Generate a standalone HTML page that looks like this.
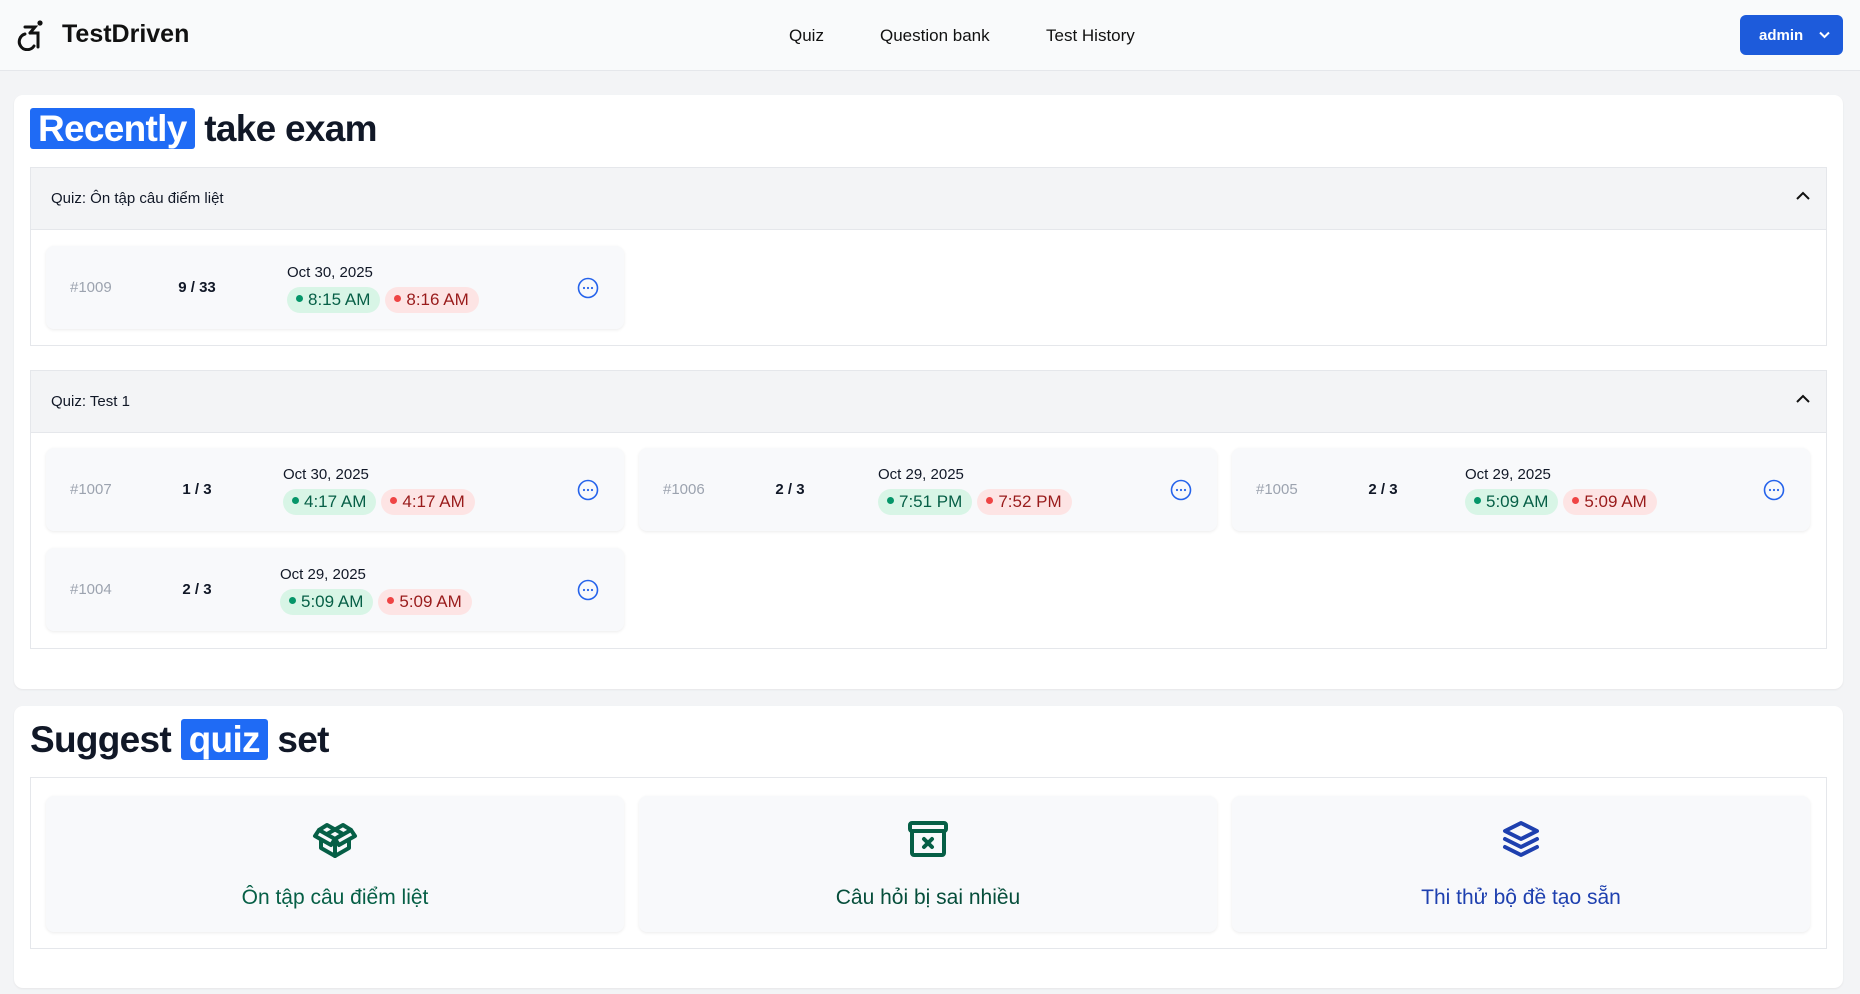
<!DOCTYPE html>
<html><head><meta charset="utf-8"><style>
*{box-sizing:border-box;margin:0;padding:0}
body{width:1860px;height:994px;overflow:hidden;background:#f3f4f6;font-family:"Liberation Sans","Noto Sans CJK SC",sans-serif;color:#111827;position:relative}
.hdr{position:absolute;left:0;top:0;width:1860px;height:71px;background:#f9fafb;border-bottom:1px solid #e5e7eb}
.logo{position:absolute;left:62px;top:20px;font-size:25px;font-weight:600;color:#111}
.nav{position:absolute;top:26px;font-size:17px;font-weight:500;color:#111}
.admin{position:absolute;left:1740px;top:15px;width:103px;height:40px;background:#1d5bdb;border-radius:6px;color:#fff;font-size:15px;font-weight:700;padding:12px 0 0 19px}
.card{position:absolute;left:14px;width:1829px;background:#fff;border-radius:9px;box-shadow:0 1px 2px rgba(0,0,0,.06)}
h1{position:absolute;left:16px;font-size:37px;font-weight:700;color:#111827;letter-spacing:-0.7px;white-space:nowrap}
.hl{background:#1f6bf5;color:#fff;border-radius:3px;padding:0 8px}
.acc{position:absolute;left:16px;width:1797px;border:1px solid #e5e7eb}
.acch{height:62px;background:#f3f4f6;border-bottom:1px solid #e5e7eb;font-size:15px;font-weight:500;padding:22px 0 0 20px;position:relative}
.acch svg{position:absolute;right:16px;top:23px}
.it{position:absolute;width:578px;height:83px;background:#f8f9fb;border-radius:8px;box-shadow:0 1px 3px rgba(0,0,0,.08)}
.id{position:absolute;left:24px;top:33px;font-size:15px;color:#9ca3af}
.sc{position:absolute;left:121px;width:60px;text-align:center;top:33px;font-size:15px;font-weight:600}
.dt{position:absolute;top:18px;font-size:15px;font-weight:500}
.pills{position:absolute;top:41px;white-space:nowrap}
.p{display:inline-block;height:26px;border-radius:13px;font-size:17px;font-weight:500;padding:3px 10px 0 9px;margin-right:5px}
.p i{display:inline-block;width:7px;height:7px;border-radius:50%;margin-right:5px;vertical-align:3px}
.g{background:#d8f5e6;color:#065f46}.g i{background:#059669}
.r{background:#fde4e4;color:#991b1b}.r i{background:#ef4444}
.dots{position:absolute;right:25px;top:31px}
.sg{position:absolute;top:18px;width:578px;height:136px;background:#f8f9fb;border-radius:8px;box-shadow:0 1px 3px rgba(0,0,0,.08);text-align:center}
.sg svg{margin-top:19px}
.sg div{font-size:21px;font-weight:500;margin-top:18px}
</style></head><body>
<div class="hdr">
<svg style="position:absolute;left:17px;top:19px" width="30" height="32" viewBox="0 0 30 32" fill="none" stroke="#111" stroke-width="3" stroke-linecap="round"><circle cx="23" cy="4" r="2.6" fill="#111" stroke="none"/><path d="M8 8h10l-5 6"/><path d="M13 14h8v14"/><path d="M8 15a8 8 0 1 0 9 12"/></svg>
<div class="logo">TestDriven</div>
<div class="nav" style="left:789px">Quiz</div>
<div class="nav" style="left:880px">Question bank</div>
<div class="nav" style="left:1046px">Test History</div>
<div class="admin">admin <svg style="position:absolute;left:79px;top:16px" width="11" height="8" viewBox="0 0 11 8" fill="none" stroke="#fff" stroke-width="2"><path d="M1 1.5l4.5 4.5l4.5-4.5"/></svg></div>
</div>

<div class="card" style="top:95px;height:594px">
<h1 style="top:13px"><span class="hl">Recently</span> take exam</h1>
<div class="acc" style="top:72px;height:179px">
<div class="acch">Quiz: Ôn tập câu điểm liệt<svg width="14" height="9" viewBox="0 0 14 9" fill="none" stroke="#111" stroke-width="2"><path d="M1 8l6-6l6 6"/></svg></div>
<div class="it" style="left:15px;top:78px"><div class="id">#1009</div><div class="sc">9 / 33</div><div class="dt" style="left:241px">Oct 30, 2025</div><div class="pills" style="left:241px"><span class="p g"><i></i>8:15 AM</span><span class="p r"><i></i>8:16 AM</span></div><svg class="dots" width="22" height="22" viewBox="0 0 22 22"><circle cx="11" cy="11" r="9.5" fill="none" stroke="#2563eb" stroke-width="1.6"/><circle cx="7" cy="11" r="1.1" fill="#2563eb"/><circle cx="11" cy="11" r="1.1" fill="#2563eb"/><circle cx="15" cy="11" r="1.1" fill="#2563eb"/></svg></div>
</div>
<div class="acc" style="top:275px;height:279px">
<div class="acch">Quiz: Test 1<svg width="14" height="9" viewBox="0 0 14 9" fill="none" stroke="#111" stroke-width="2"><path d="M1 8l6-6l6 6"/></svg></div>
<div class="it" style="left:15px;top:77px"><div class="id">#1007</div><div class="sc">1 / 3</div><div class="dt" style="left:237px">Oct 30, 2025</div><div class="pills" style="left:237px"><span class="p g"><i></i>4:17 AM</span><span class="p r"><i></i>4:17 AM</span></div><svg class="dots" width="22" height="22" viewBox="0 0 22 22"><circle cx="11" cy="11" r="9.5" fill="none" stroke="#2563eb" stroke-width="1.6"/><circle cx="7" cy="11" r="1.1" fill="#2563eb"/><circle cx="11" cy="11" r="1.1" fill="#2563eb"/><circle cx="15" cy="11" r="1.1" fill="#2563eb"/></svg></div>
<div class="it" style="left:608px;top:77px"><div class="id">#1006</div><div class="sc">2 / 3</div><div class="dt" style="left:239px">Oct 29, 2025</div><div class="pills" style="left:239px"><span class="p g"><i></i>7:51 PM</span><span class="p r"><i></i>7:52 PM</span></div><svg class="dots" width="22" height="22" viewBox="0 0 22 22"><circle cx="11" cy="11" r="9.5" fill="none" stroke="#2563eb" stroke-width="1.6"/><circle cx="7" cy="11" r="1.1" fill="#2563eb"/><circle cx="11" cy="11" r="1.1" fill="#2563eb"/><circle cx="15" cy="11" r="1.1" fill="#2563eb"/></svg></div>
<div class="it" style="left:1201px;top:77px"><div class="id">#1005</div><div class="sc">2 / 3</div><div class="dt" style="left:233px">Oct 29, 2025</div><div class="pills" style="left:233px"><span class="p g"><i></i>5:09 AM</span><span class="p r"><i></i>5:09 AM</span></div><svg class="dots" width="22" height="22" viewBox="0 0 22 22"><circle cx="11" cy="11" r="9.5" fill="none" stroke="#2563eb" stroke-width="1.6"/><circle cx="7" cy="11" r="1.1" fill="#2563eb"/><circle cx="11" cy="11" r="1.1" fill="#2563eb"/><circle cx="15" cy="11" r="1.1" fill="#2563eb"/></svg></div>
<div class="it" style="left:15px;top:177px"><div class="id">#1004</div><div class="sc">2 / 3</div><div class="dt" style="left:234px">Oct 29, 2025</div><div class="pills" style="left:234px"><span class="p g"><i></i>5:09 AM</span><span class="p r"><i></i>5:09 AM</span></div><svg class="dots" width="22" height="22" viewBox="0 0 22 22"><circle cx="11" cy="11" r="9.5" fill="none" stroke="#2563eb" stroke-width="1.6"/><circle cx="7" cy="11" r="1.1" fill="#2563eb"/><circle cx="11" cy="11" r="1.1" fill="#2563eb"/><circle cx="15" cy="11" r="1.1" fill="#2563eb"/></svg></div>
</div>
</div>

<div class="card" style="top:706px;height:282px">
<h1 style="top:13px">Suggest <span class="hl">quiz</span> set</h1>
<div class="acc" style="top:71px;height:172px">
<div class="sg" style="left:15px;color:#065f46"><svg width="48" height="48" viewBox="0 0 24 24" fill="none" stroke="#065f46" stroke-width="2" stroke-linejoin="round" stroke-linecap="round"><path d="M12 12l-8-4.5l4-2.5l8 4.5z"/><path d="M12 12l8-4.5l-4-2.5l-8 4.5"/><path d="M4 7.5l-2 3l8 4.5l2-3"/><path d="M20 7.5l2 3l-8 4.5l-2-3"/><path d="M5 12.5v4l7 4l7-4v-4"/><path d="M12 12v8.5"/></svg><div>Ôn tập câu điểm liệt</div></div>
<div class="sg" style="left:608px;color:#064e3b"><svg width="48" height="48" viewBox="0 0 24 24" fill="none" stroke="#065f46" stroke-width="2" stroke-linejoin="round" stroke-linecap="round"><path d="M4 8v11a1 1 0 0 0 1 1h14a1 1 0 0 0 1-1V8"/><rect x="3" y="4" width="18" height="4" rx="1"/><path d="M10 12l4 4M14 12l-4 4"/></svg><div>Câu hỏi bị sai nhiều</div></div>
<div class="sg" style="left:1201px;color:#1e40af"><svg width="48" height="48" viewBox="0 0 24 24" fill="none" stroke="#1e40af" stroke-width="2" stroke-linejoin="round" stroke-linecap="round"><path d="M12 4l-8 4l8 4l8-4z"/><path d="M4 12l8 4l8-4"/><path d="M4 16l8 4l8-4"/></svg><div>Thi thử bộ đề tạo sẵn</div></div>
</div>
</div>
</body></html>
